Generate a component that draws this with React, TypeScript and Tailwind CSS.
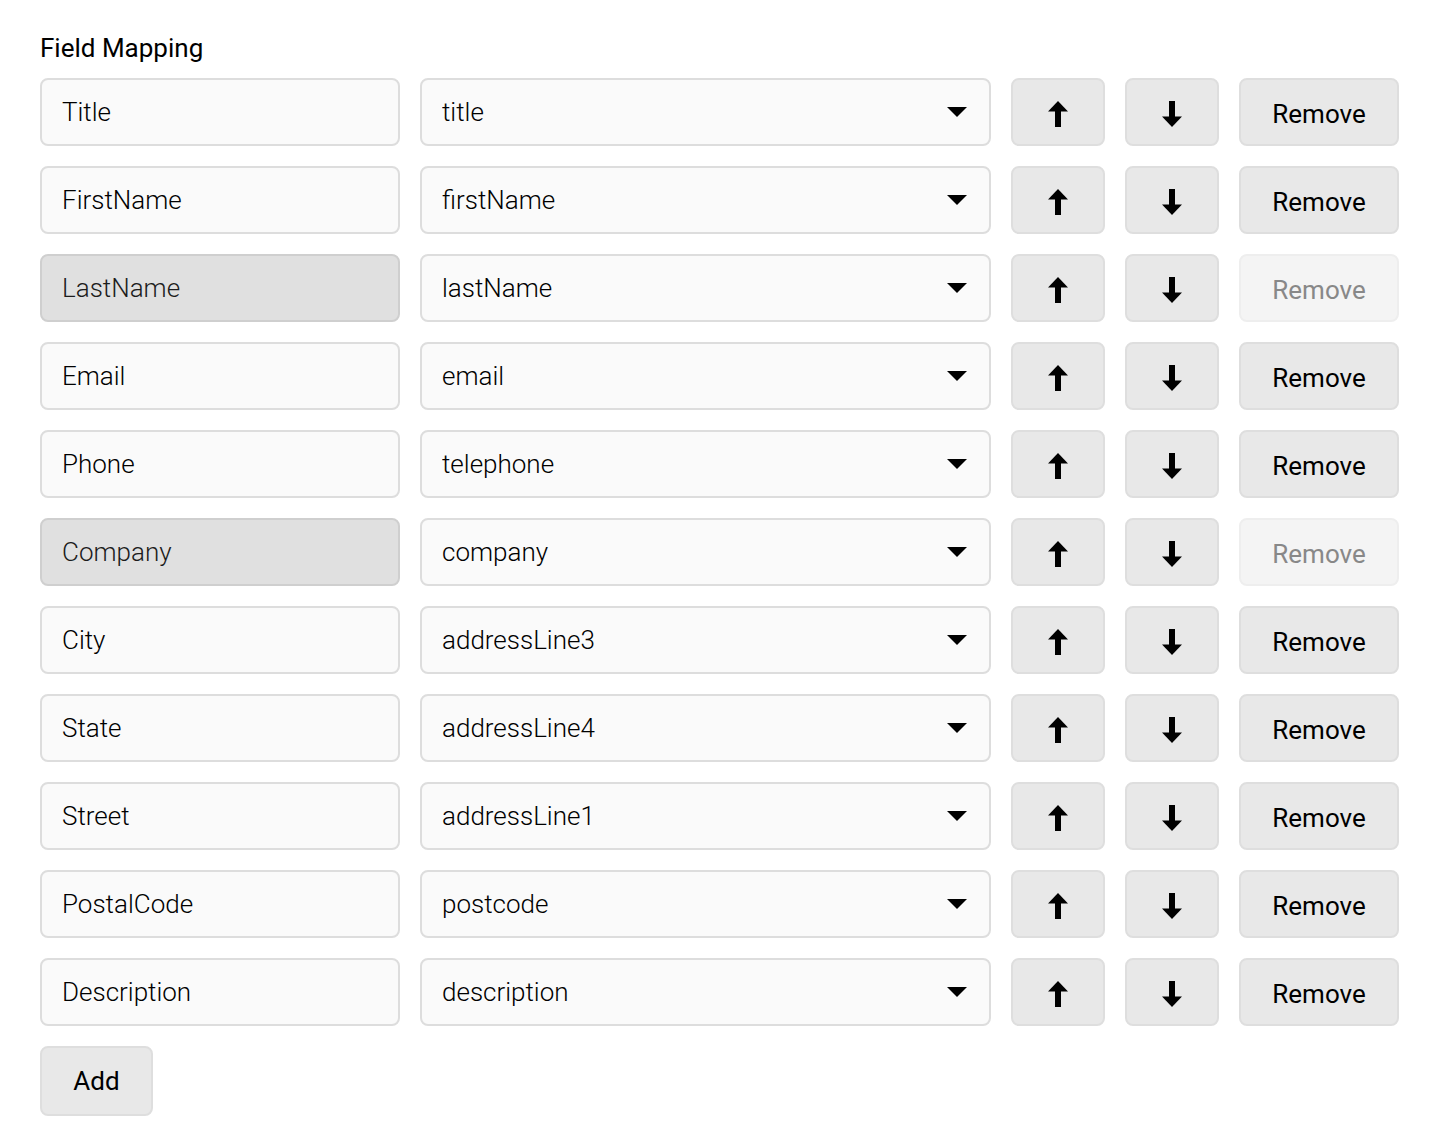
import React from "react";

type Mapping = { label: string; field: string; locked?: boolean };

const mappings: Mapping[] = [
  { label: "Title", field: "title" },
  { label: "FirstName", field: "firstName" },
  { label: "LastName", field: "lastName", locked: true },
  { label: "Email", field: "email" },
  { label: "Phone", field: "telephone" },
  { label: "Company", field: "company", locked: true },
  { label: "City", field: "addressLine3" },
  { label: "State", field: "addressLine4" },
  { label: "Street", field: "addressLine1" },
  { label: "PostalCode", field: "postcode" },
  { label: "Description", field: "description" },
];

const fieldOptions = mappings.map((m) => m.field);

const ArrowUp = () => (
  <svg width="20" height="26" viewBox="0 0 20 26" fill="#000">
    <polygon points="10,0 20,10.5 0,10.5" />
    <rect x="7" y="10" width="6" height="16" />
  </svg>
);

const ArrowDown = () => (
  <svg width="20" height="26" viewBox="0 0 20 26" fill="#000">
    <rect x="7" y="0" width="6" height="16" />
    <polygon points="0,15.5 20,15.5 10,26" />
  </svg>
);

const Caret = () => (
  <svg width="20" height="10" viewBox="0 0 20 10" fill="#000">
    <polygon points="0,0 20,0 10,10" />
  </svg>
);

const btn =
  "shrink-0 flex items-center justify-center h-[68px] pt-[4px] rounded-lg border-2 border-[#dedede] bg-[#e8e8e8] text-[26px] text-black";

const Row = ({ m }: { m: Mapping }) => (
  <div className="flex items-center gap-5">
    {/* locked rows are read-only, kept enabled so the text stays dark */}
    <input
      readOnly
      value={m.label}
      aria-disabled={m.locked}
      className={
        m.locked
          ? "shrink-0 w-[360px] h-[68px] rounded-lg border-2 border-[#cfcfcf] bg-[#e0e0e0] px-5 text-[26px] font-light text-[#1c1c1c] outline-none"
          : "shrink-0 w-[360px] h-[68px] rounded-lg border-2 border-[#dddddd] bg-[#fafafa] px-5 text-[26px] font-light text-black outline-none"
      }
    />
    <div className="relative shrink-0 w-[571px] h-[68px]">
      <select
        defaultValue={m.field}
        className="w-full h-full appearance-none rounded-lg border-2 border-[#dddddd] bg-[#fafafa] pl-5 pr-14 text-[26px] font-light text-black outline-none"
      >
        {fieldOptions.map((f) => (
          <option key={f} value={f}>
            {f}
          </option>
        ))}
      </select>
      <span className="pointer-events-none absolute right-[24px] top-[29px] flex">
        <Caret />
      </span>
    </div>
    <button className={`${btn} w-[94px]`}>
      <ArrowUp />
    </button>
    <button className={`${btn} w-[94px]`}>
      <ArrowDown />
    </button>
    {m.locked ? (
      <button
        disabled
        className="shrink-0 flex items-center justify-center w-[160px] h-[68px] pt-[4px] rounded-lg border-2 border-[#eeeeee] bg-[#f4f4f4] text-[26px] text-[#888888]"
      >
        Remove
      </button>
    ) : (
      <button className={`${btn} w-[160px]`}>Remove</button>
    )}
  </div>
);

export default function App() {
  return (
    <div className="min-h-screen bg-white pl-10 pr-[38px] pt-[30px] pb-6 font-['Roboto',sans-serif] text-black">
      <h2 className="text-[26px] leading-[36px] font-normal mb-[12px]">Field Mapping</h2>
      <div className="flex flex-col gap-5">
        {mappings.map((m) => (
          <Row key={m.label} m={m} />
        ))}
      </div>
      <button className="mt-5 flex items-center justify-center w-[113px] h-[70px] rounded-lg border-2 border-[#dedede] bg-[#e8e8e8] text-[26px] text-black">
        Add
      </button>
    </div>
  );
}
